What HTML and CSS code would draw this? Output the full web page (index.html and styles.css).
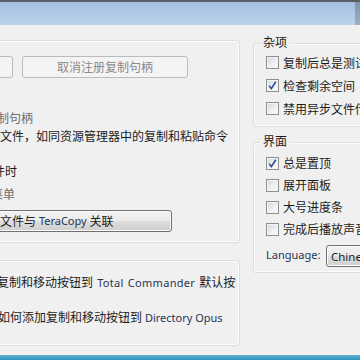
FILE: index.html
```html
<!DOCTYPE html>
<html lang="zh-CN">
<head>
<meta charset="utf-8">
<title>TeraCopy 选项</title>
<link rel="stylesheet" href="styles.css">
</head>
<body>
<div class="window">
  <div class="frame-top"></div>
  <div class="titlebar"><div class="title-edge"></div></div>
  <div class="client">
    <div class="col-left">
      <div class="group g-handler">
        <div class="btn-row">
          <div class="btn disabled b1">注册复制句柄</div>
          <div class="btn disabled b2">取消注册复制句柄</div>
        </div>
        <div class="line gray l1">已注册复制句柄</div>
        <div class="line l2">复制和移动文件，如同资源管理器中的复制和粘贴命令</div>
        <div class="line l3">拖放文件时</div>
        <div class="line gray l4">显示在右键菜单</div>
        <div class="btn assoc">将所有文件与<span class="lat"> TeraCopy </span>关联</div>
      </div>
      <div class="group g-tc">
        <div class="line l6">添加复制和移动按钮到<span class="lat tc"> Total Commander </span>默认按钮栏</div>
        <div class="line l7">查看如何添加复制和移动按钮到<span class="lat"> Directory Opus</span></div>
      </div>
    </div>
    <div class="col-right">
      <div class="group g-misc">
        <div class="legend">杂项</div>
        <div class="rows r23">
          <div class="row"><span class="cb"></span><span class="lbl">复制后总是测试</span></div>
          <div class="row"><span class="cb"><svg viewBox="0 0 13 13" width="13" height="13"><path d="M3.2 6.6 L5.3 9.6 L9.8 2.8" fill="none" stroke="#2b4a9a" stroke-width="1.6"/></svg></span><span class="lbl">检查剩余空间</span></div>
          <div class="row"><span class="cb"></span><span class="lbl">禁用异步文件传输</span></div>
        </div>
      </div>
      <div class="group g-ui">
        <div class="legend">界面</div>
        <div class="rows r22">
          <div class="row"><span class="cb"><svg viewBox="0 0 13 13" width="13" height="13"><path d="M3.2 6.6 L5.3 9.6 L9.8 2.8" fill="none" stroke="#2b4a9a" stroke-width="1.6"/></svg></span><span class="lbl">总是置顶</span></div>
          <div class="row"><span class="cb"></span><span class="lbl">展开面板</span></div>
          <div class="row"><span class="cb"></span><span class="lbl">大号进度条</span></div>
          <div class="row"><span class="cb"></span><span class="lbl">完成后播放声音</span></div>
        </div>
        <div class="lang-row">
          <span class="lang-label">Language:</span>
          <div class="select">Chinese (Simplified)</div>
        </div>
      </div>
    </div>
  </div>
  <div class="frame-bottom"></div>
</div>
</body>
</html>
```
FILE: styles.css
```css
* { box-sizing: border-box; }
html, body { margin: 0; padding: 0; }
body {
  width: 360px;
  height: 360px;
  overflow: hidden;
  background: #f0f0f0;
  font-family: "Noto Sans CJK SC", "Noto Sans", sans-serif;
  font-size: 12px;
  color: #1c1c1c;
}
.window {
  width: 360px;
  height: 360px;
  display: flex;
  flex-direction: column;
  overflow: hidden;
}
.frame-top { height: 2px; background: #5a5e63; flex: none; }
.titlebar {
  height: 23px;
  flex: none;
  display: flex;
  background: linear-gradient(#a3c1e2, #bcd3eb);
}
.title-edge {
  margin-left: auto;
  width: 5px;
  background: linear-gradient(#8196ae, #9cb1c8);
}
.client {
  height: 330px;
  flex: none;
  display: flex;
  align-items: flex-start;
  background: #f0f0f0;
}
.frame-bottom {
  height: 5px;
  flex: none;
  background: linear-gradient(#5fb2d3, #2f93bd);
}

/* group boxes */
.group {
  border: 1px solid #d5dfe5;
  border-radius: 3px;
  box-shadow: inset 0 0 0 1px #fbfcfd;
}
.legend {
  width: fit-content;
  margin: -9px 0 0 6px;
  padding: 0 3px;
  line-height: 14px;
  background: #f0f0f0;
  color: #1c1c1c;
}

/* left column */
.col-left {
  flex: none;
  width: 440px;
  margin-left: -200px;
}
.g-handler {
  margin-top: 15px;
  height: 203px;
}
.g-tc {
  margin-top: 17px;
  height: 86px;
  overflow: hidden;
  padding-right: 3px;
}
.btn-row {
  display: flex;
  gap: 9px;
  margin-top: 15px;
  padding-left: 46px;
}
.btn {
  height: 22px;
  border-radius: 3px;
  display: flex;
  align-items: center;
  white-space: nowrap;
  line-height: 14px;
}
.btn.disabled {
  width: 166px;
  justify-content: center;
  border: 1px solid #b7bcbf;
  background: #f4f4f4;
  color: #8a8a8a;
}
.btn.assoc {
  width: 292px;
  margin: 8px 0 0 79px;
  padding-left: 83px;
  border: 1px solid #707070;
  background: linear-gradient(#f2f2f2 0%, #ebebeb 48%, #dddddd 52%, #cfcfcf 100%);
  box-shadow: inset 0 0 0 1px #fbfbfb;
}
.line {
  line-height: 16px;
  white-space: nowrap;
}
.gray { color: #6e6e6e; }
.lat {
  font-family: "Noto Sans", sans-serif;
  font-size: 11px;
  color: #1e3655;
  white-space: pre;
}
.lat.tc { letter-spacing: 0.3px; word-spacing: 1px; }
.l1 { margin-top: 32px; padding-left: 148px; }
.l2 { margin-top: 2px; padding-left: 139px; }
.l3 { margin-top: 19px; padding-left: 156px; }
.l4 { margin-top: 7px; padding-left: 130px; }
.l6 { margin-top: 13px; padding-left: 172px; overflow: hidden; }
.l7 { margin-top: 18px; padding-left: 173px; overflow: hidden; }

/* right column */
.col-right {
  flex: none;
  width: 140px;
  margin-left: 13px;
}
.g-misc {
  margin-top: 18px;
  height: 84px;
}
.g-ui {
  margin-top: 15px;
  height: 131px;
}
.rows { padding-left: 12px; }
.r23 { margin-top: 2px; }
.r22 { margin-top: 4px; }
.row {
  display: flex;
  align-items: center;
  white-space: nowrap;
}
.r23 .row { height: 23px; }
.r22 .row { height: 22px; }
.cb {
  flex: none;
  width: 13px;
  height: 13px;
  margin-right: 4px;
  border: 1px solid #8e8f8f;
  background: linear-gradient(135deg, #d3d6da 0%, #eef0f2 55%, #fbfbfb 100%);
  box-shadow: inset 0 0 0 1px #f4f4f4;
}
.cb svg {
  display: block;
  margin: -1px;
}
.lbl { line-height: 14px; }
.lang-row {
  display: flex;
  align-items: center;
  height: 24px;
  margin-top: 4px;
  padding-left: 12px;
  white-space: nowrap;
}
.lang-label {
  width: 60px;
  flex: none;
  font-family: "Noto Sans", sans-serif;
  font-size: 11px;
  color: #1e3655;
  margin-top: -3px;
}
.select {
  flex: none;
  height: 22px;
  padding-left: 4px;
  display: flex;
  align-items: center;
  border: 1px solid #707070;
  border-radius: 3px;
  background: linear-gradient(#f2f2f2 0%, #ebebeb 48%, #dddddd 52%, #cfcfcf 100%);
  box-shadow: inset 0 0 0 1px #fbfbfb;
  font-family: "Noto Sans", sans-serif;
  font-size: 11.5px;
  color: #1c1c1c;
}
```
